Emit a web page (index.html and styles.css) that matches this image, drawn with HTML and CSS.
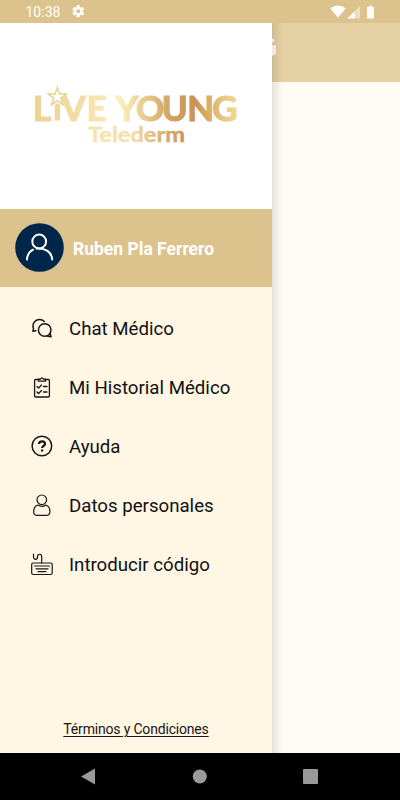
FILE: index.html
```
<!DOCTYPE html>
<html lang="es">
<head>
<meta charset="utf-8">
<title>Live Young Telederm</title>
<link rel="stylesheet" href="styles.css">
</head>
<body>
<div class="phone">
  <header class="status">
    <span class="time">10:38</span>
    <svg class="gear" viewBox="0 0 24 24"><path fill="#fff" d="M19.4 13a7.500 7.500 0 0 0 0-2l2.100-1.650a.5.5 0 0 0 .12-.64l-2-3.460a.5.5 0 0 0-.61-.22l-2.490 1a7.300 7.300 0 0 0-1.690-.98l-.38-2.650A.5.500 0 0 0 14 2h-4a.5.5 0 0 0-.49.42l-.38 2.650c-.61.25-1.170.59-1.690.98l-2.490-1a.5.5 0 0 0-.61.22l-2 3.460a.5.5 0 0 0 .12.64L4.570 11a7.900 7.900 0 0 0 0 2l-2.110 1.650a.5.5 0 0 0-.12.64l2 3.460a.5.5 0 0 0 .61.220l2.490-1c.52.4 1.080.73 1.690.98l.38 2.650A.5.5 0 0 0 10 22h4a.5.5 0 0 0 .49-.42l.38-2.650a7.300 7.300 0 0 0 1.690-.98l2.490 1a.5.5 0 0 0 .61-.220l2-3.460a.5.5 0 0 0-.12-.64zM12 15.500a3.500 3.500 0 1 1 0-7 3.500 3.500 0 0 1 0 7z"/></svg>
    <svg class="signals" viewBox="0 0 46 14">
      <path fill="#fff" d="M0.300 3.300Q8-2.300 15.700 3.300L8 12.800z"/>
      <path fill="#fff" opacity=".45" d="M30 1v12.500H17.500z"/>
      <path fill="#fff" d="M24.500 6.500v7h-7z"/>
      <path fill="#fff" d="M37 2h2V.7h3V2h2v11.500h-7z"/>
    </svg>
  </header>
  <div class="screen">
    <nav class="drawer">
      <div class="brand">
        <svg class="logo" viewBox="0 0 272 185">
          <defs><linearGradient id="gold" gradientUnits="userSpaceOnUse" x1="35" y1="0" x2="238" y2="0">
            <stop offset="0" stop-color="#edd391"/><stop offset=".22" stop-color="#f2dda4"/><stop offset=".42" stop-color="#fdeebf"/><stop offset=".53" stop-color="#e9cd93"/><stop offset=".67" stop-color="#d0a15f"/><stop offset=".79" stop-color="#ca9453"/><stop offset=".91" stop-color="#e2c17c"/><stop offset="1" stop-color="#f1dc94"/>
          </linearGradient>
          <linearGradient id="gold-small" gradientUnits="userSpaceOnUse" x1="88" y1="0" x2="185" y2="0">
            <stop offset="0" stop-color="#f8e4ae"/><stop offset=".45" stop-color="#f4dfaa"/><stop offset=".75" stop-color="#d9b375"/><stop offset="1" stop-color="#ca9655"/>
          </linearGradient></defs>
          <text class="word" y="97.500" fill="url(#gold)"><tspan x="33">L</tspan><tspan x="61.500">V</tspan><tspan x="86.800">E</tspan><tspan x="115.500">Y</tspan><tspan x="136">O</tspan><tspan x="161.800">U</tspan><tspan x="187.300">N</tspan><tspan x="212.300">G</tspan></text>
          <path fill="url(#gold)" d="M54.700 97.500V82l2.700-2 2.700 2v15.500z"/>
          <path class="star" d="M57.300 64.500l2.200 6.500h6.800l-5.400 4.100 2 6.500-5.600-3.900-5.600 3.900 2-6.500-5.400-4.100h6.800z"/>
          <text class="sub" x="88" y="119" textLength="97" lengthAdjust="spacingAndGlyphs" fill="url(#gold-small)">Telederm</text>
        </svg>
      </div>
      <div class="user">
        <svg class="avatar" viewBox="0 0 49 49"><circle cx="24.500" cy="24.500" r="24.300" fill="#002649"/><g fill="none" stroke="#fff" stroke-width="2" stroke-linecap="round"><circle cx="24.200" cy="18.500" r="6.900"/><path d="M12 36.500c.3-4.500 2.500-8 6-9.800M21.500 25.500c9-.8 15 3.500 15.700 11"/></g></svg>
        <span>Ruben Pla Ferrero</span>
      </div>
      <ul class="menu">
        <li><svg viewBox="0 0 24 24"><path d="M14.300 4.500C11.500 1.700 7.300 2 4.800 4.500 2.900 6.500 2.600 9 3.500 11.500L2.900 14.300l3-.6"/><circle cx="14.700" cy="13" r="6.300"/><path d="M20 16.500l1.100 3.300-4.100-.9"/></svg><span>Chat Médico</span></li>
        <li><svg class="medium" viewBox="0 0 24 24"><rect x="4.600" y="3.500" width="14.800" height="17.500" rx="1"/><path fill="#fff6e4" d="M8.500 5.200V3.200H10.500Q12 .5 13.500 3.200h2v2z"/><path d="M7 10.500l1.600 1.500L11.500 9M13.500 10.500h3.500M7 16l1.600 1.500 2.900-3M13.500 16h3.500"/></svg><span>Mi Historial Médico</span></li>
        <li><svg viewBox="0 0 24 24"><circle cx="11.900" cy="11" r="9.800"/><path class="thick" d="M9 8.900C9 5.500 15 5.600 15 8.900c0 2-2.900 2.100-2.900 4.100M12.100 14.600v2"/></svg><span>Ayuda</span></li>
        <li><svg class="thin" viewBox="0 0 24 24"><circle cx="11.800" cy="5.800" r="4.800"/><path d="M8 11c-2.500.8-4.300 3-4.300 6.500 0 2.700.8 3.800 3 3.800h10.200c2.200 0 3-1.100 3-3.800 0-3.500-1.700-5.700-4.300-6.500-2 1.800-5.400 1.800-7.600 0z"/></svg><span>Datos personales</span></li>
        <li><svg class="thin" viewBox="0 0 24 24"><rect x="1.700" y="10" width="20.500" height="11.500" rx="1.500"/><path d="M3.500 1v2.700c0 3.500 4 3.500 4 0 0-3.300 4.200-3.300 4.200 0v6.300M4.500 13h15M6 15.800h12M8 18.700h8"/></svg><span>Introducir código</span></li>
      </ul>
      <a class="terms">Términos y Condiciones</a>
    </nav>
    <main class="content"><div class="appbar"><svg class="fragment" viewBox="0 0 4 19"><path fill="#eeeae1" d="M0 0l3 2.500L0 5zM0 7h4v9l-4 2z"/></svg></div></main>
  </div>
  <footer class="system"><svg viewBox="0 0 400 47"><g fill="#999"><path d="M81 23.500l14-8v16z"/><circle cx="199.800" cy="23.500" r="7"/><rect x="303" y="16" width="15" height="15" rx="1"/></g></svg></footer>
</div>
</body>
</html>
```
FILE: styles.css
```
* { box-sizing: border-box; }
body { margin: 0; font-family: Roboto, sans-serif; }
.phone { width: 400px; height: 800px; display: flex; flex-direction: column; overflow: hidden; }
.status { height: 23px; flex: none; background: #dcc38d; color: #fff; display: flex; align-items: center; padding: 0 24px 0 25.500px; }
.time { font-size: 14px; line-height: 23px; width: 45px; padding-top: 1px; }
.gear { width: 14.500px; height: 14.500px; }
.signals { width: 46px; height: 14px; margin-left: auto; }
.screen { flex: 1; display: flex; min-height: 0; }
.drawer { width: 272px; flex: none; background: #fff6e4; display: flex; flex-direction: column; }
.brand { height: 186px; flex: none; background: #fff; }
.logo { display: block; width: 272px; height: 185px; }
.word { font: 700 35px Lato, sans-serif; stroke: url(#gold); stroke-width: 1.200px; }
.sub { font: 700 20.500px Lato, sans-serif; stroke: url(#gold-small); stroke-width: .4px; }
.star { fill: #fff; stroke: #edd08b; stroke-width: 1.500px; }
.user { height: 78px; flex: none; background: #dcc38d; display: flex; align-items: center; gap: 9.500px; padding-left: 14.500px; color: #fff; font-size: 17.500px; font-weight: 700; }
.user span { padding-top: 1px; }
.avatar { width: 49px; height: 49px; margin-top: -1px; }
.menu { list-style: none; margin: 12px 0 0; padding: 0 0 0 30px; }
.menu li { height: 59px; display: flex; align-items: center; gap: 15px; font-size: 18.670px; color: #111; white-space: nowrap; }
.menu svg { width: 24px; height: 24px; flex: none; fill: none; stroke: #161616; stroke-width: 1.500px; stroke-linecap: round; stroke-linejoin: round; }
.menu svg.medium { stroke-width: 1.300px; }
.menu svg.thin { stroke-width: 1.200px; }
.menu .thick { stroke-width: 2.200px; stroke-linecap: butt; }
.terms { margin: auto 0 15px; text-align: center; font-size: 14px; letter-spacing: -.18px; line-height: 18px; color: #171717; text-decoration: underline; text-underline-offset: 2px; text-decoration-thickness: 1px; }
.content { flex: 1; background: #fffcf5; box-shadow: inset 14px 0 10px -10px rgba(0,0,0,.13); }
.appbar { height: 59px; background: #e5d1a4; box-shadow: inset 14px 0 10px -10px rgba(0,0,0,.13); padding-top: 15px; }
.fragment { display: block; width: 4px; height: 19px; }
.system { height: 47px; flex: none; background: #000; }
.system svg { display: block; width: 400px; height: 47px; }
```
